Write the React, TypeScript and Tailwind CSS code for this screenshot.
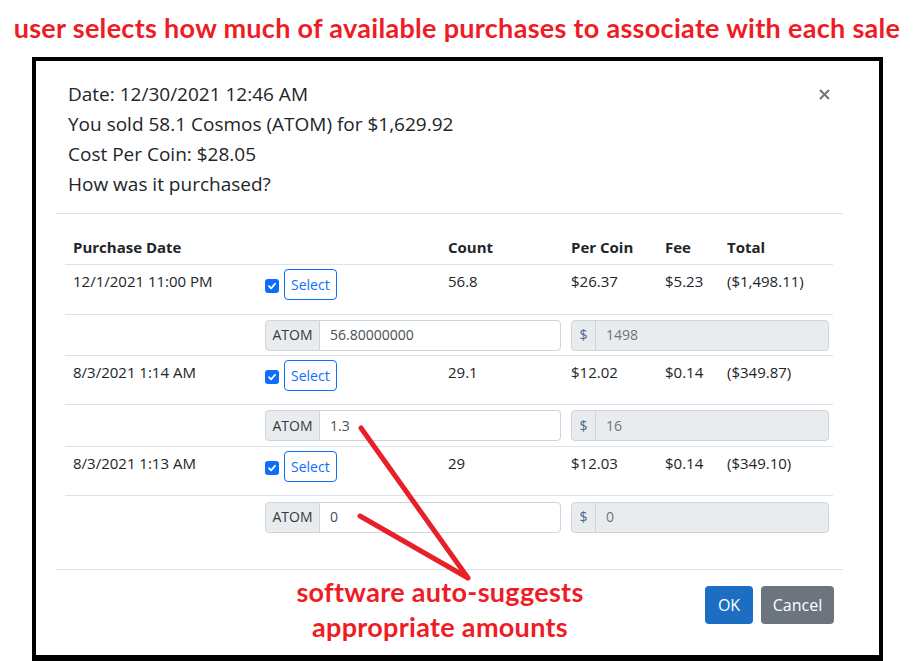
import React from "react";

const rows = [
  { date: "12/1/2021 11:00 PM", count: "56.8", perCoin: "$26.37", fee: "$5.23", total: "($1,498.11)", atom: "56.80000000", usd: "1498", h: "h-[50px]", ih: "h-[41px]" },
  { date: "8/3/2021 1:14 AM", count: "29.1", perCoin: "$12.02", fee: "$0.14", total: "($349.87)", atom: "1.3", usd: "16", h: "h-[49px]", ih: "h-[42px]" },
  { date: "8/3/2021 1:13 AM", count: "29", perCoin: "$12.03", fee: "$0.14", total: "($349.10)", atom: "0", usd: "0", h: "h-[49px]", ih: "h-[42px]" },
];

const grid = "grid grid-cols-[192px_183px_123px_94px_62px_114px]";

function Check() {
  return (
    <span className="mt-[3px] flex h-[14px] w-[14px] items-center justify-center rounded-[3px] bg-[#0d6efd]">
      <svg width="10" height="10" viewBox="0 0 10 10">
        <path d="M2 5.2 4.1 7.3 8 2.8" fill="none" stroke="white" strokeWidth="1.8" strokeLinecap="round" strokeLinejoin="round" />
      </svg>
    </span>
  );
}

function PurchaseRows() {
  return (
    <>
      {rows.map((r, i) => (
        <React.Fragment key={i}>
          <div className={`${grid} ${r.h} border-b border-[#dee2e6]`}>
            <div className="pl-2 pt-[5px]">{r.date}</div>
            <div className="flex items-center gap-[5px] self-start pl-2 pt-[4px]">
              <Check />
              <button className="h-[31px] rounded-[4px] border border-[#0d6efd] px-[6px] text-[14px] text-[#0d6efd]">
                Select
              </button>
            </div>
            <div className="pl-2 pt-[5px]">{r.count}</div>
            <div className="pl-2 pt-[5px]">{r.perCoin}</div>
            <div className="pl-2 pt-[5px]">{r.fee}</div>
            <div className="pl-2 pt-[5px]">{r.total}</div>
          </div>
          <div className={`${grid} ${r.ih} items-center ${i < rows.length - 1 ? "border-b border-[#dee2e6]" : ""}`}>
            <div />
            <div className="col-span-2 pl-2 pr-[2px]">
              <div className="flex h-[31px] text-[14px]">
                <span className="flex w-[55px] items-center justify-center rounded-l-[4px] border border-[#ced4da] bg-[#e9ecef] text-[#343a40]">
                  ATOM
                </span>
                <span className="-ml-px flex flex-1 items-center rounded-r-[4px] border border-[#ced4da] bg-white pl-[10px] text-[#495057]">
                  {r.atom}
                </span>
              </div>
            </div>
            <div className="col-span-3 pl-2 pr-[4px]">
              <div className="flex h-[31px] text-[14px]">
                <span className="flex w-[25px] items-center justify-center rounded-l-[4px] border border-[#ced4da] bg-[#e9ecef] text-[#4d6a8a]">
                  $
                </span>
                <span className="-ml-px flex flex-1 items-center rounded-r-[4px] border border-[#ced4da] bg-[#e9ecef] pl-[10px] text-[#6c757d]">
                  {r.usd}
                </span>
              </div>
            </div>
          </div>
        </React.Fragment>
      ))}
    </>
  );
}

export default function App() {
  return (
    <div className="relative h-[661px] w-[914px] overflow-hidden bg-white font-['Open_Sans',sans-serif] text-[#212529]">
      <div className="flex h-[57px] items-center justify-center pb-[1px] font-['Lato',sans-serif] text-[27px] font-bold tracking-[0.3px] text-[#ee1c25]">
        user selects how much of available purchases to associate with each sale
      </div>

      <div className="ml-[32px] h-[604px] w-[851px] border-[4px] border-b-[6px] border-black">
        <div className="ml-[20px] w-[787px]">
          <div className="flex justify-between border-b border-[#dee2e6] pb-[14px] pl-[12px] pr-[12px] pt-[18px] text-[19px] leading-[30px]">
            <div>
              <div>Date: 12/30/2021 12:46 AM</div>
              <div>You sold 58.1 Cosmos (ATOM) for $1,629.92</div>
              <div>Cost Per Coin: $28.05</div>
              <div>How was it purchased?</div>
            </div>
            <div className="pr-[1px] pt-[10px]">
              <svg width="11" height="11" viewBox="0 0 11 11">
                <path d="M1 1 10 10M10 1 1 10" stroke="#6c757d" strokeWidth="2" />
              </svg>
            </div>
          </div>

          <div className="h-[355px] pl-[9px] pr-[10px] pt-[16px] text-[15px] leading-[22px]">
            <div className={`${grid} h-[35px] items-center border-b border-[#dee2e6] font-bold`}>
              <div className="pl-2">Purchase Date</div>
              <div />
              <div className="pl-2">Count</div>
              <div className="pl-2">Per Coin</div>
              <div className="pl-2">Fee</div>
              <div className="pl-2">Total</div>
            </div>
            <PurchaseRows />
          </div>

          <div className="relative flex justify-end gap-[8px] border-t border-[#dee2e6] pr-[9px] pt-[16px]">
            <div className="absolute left-[184px] top-[4px] w-[400px] text-center font-['Lato',sans-serif] text-[27px] font-bold leading-[35px] tracking-[0.3px] text-[#ee1c25]">
              <div>software auto-suggests</div>
              <div>appropriate amounts</div>
            </div>
            <button className="h-[38px] w-[48px] rounded-[4px] bg-[#1b6ec2] text-[16px] text-white">OK</button>
            <button className="h-[38px] w-[73px] rounded-[4px] bg-[#6c757d] text-[16px] text-white">Cancel</button>
          </div>
        </div>
      </div>

      <svg className="pointer-events-none absolute left-0 top-0" width="914" height="661">
        <path d="M361 428 468 578M360 516 468 578" stroke="#e8202a" strokeWidth="5" strokeLinecap="round" fill="none" />
      </svg>
    </div>
  );
}
